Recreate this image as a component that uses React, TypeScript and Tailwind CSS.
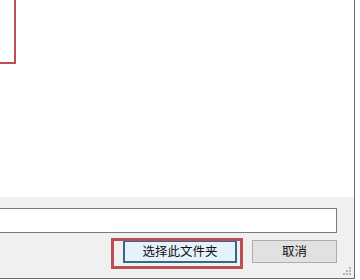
export default function App() {
  const font = { fontFamily: '"Microsoft YaHei", "Noto Sans CJK SC", sans-serif' };
  return (
    <div className="relative w-[360px] h-[280px] bg-white overflow-hidden" style={font}>
      <div className="w-[355px] h-[279px] flex flex-col border-r border-b border-[#6b6b6b]">
        {/* folder list area */}
        <div className="h-[197px] bg-white">
          <div className="w-[16px] h-[64px] border-r-2 border-b-2 border-[#bd4f53]" />
        </div>

        {/* bottom panel */}
        <div className="relative flex-1 bg-[#f0f0f0] pt-[11px]">
          <div className="w-[337px] h-[25px] bg-white border-t border-r border-b border-[#7a7a7a]" />
          <div className="flex mt-[7px]">
            <button className="ml-[123px] w-[114px] h-[23px] border-2 border-[#36668a] bg-[#e5f1fb] text-[12.5px] leading-none text-[#111]">
              选择此文件夹
            </button>
            <button className="ml-[15px] w-[85px] h-[23px] border border-[#adadad] bg-[#e1e1e1] text-[12.5px] leading-none text-[#111]">
              取消
            </button>
          </div>

          {/* annotation around the select button */}
          <div className="absolute left-[111px] top-[41px] w-[132px] h-[31px] border-[3px] border-[#bd4f53]" />

          {/* resize grip */}
          <svg className="absolute right-[2px] bottom-[2px]" width="10" height="10" viewBox="0 0 10 10">
            {[
              [8, 2],
              [8, 5],
              [5, 5],
              [8, 8],
              [5, 8],
              [2, 8],
            ].map(([x, y]) => (
              <rect key={`${x}-${y}`} x={x - 1} y={y - 1} width="2" height="2" fill="#b4b4b4" />
            ))}
          </svg>
        </div>
      </div>
    </div>
  );
}
